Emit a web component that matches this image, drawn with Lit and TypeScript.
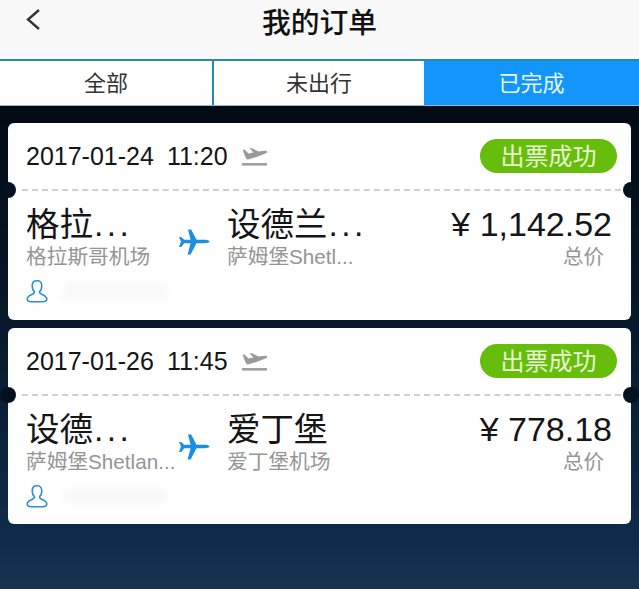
import { LitElement, html, css } from "lit";
import { customElement } from "lit/decorators.js";

const plane = html`<svg class="plane" viewBox="0 0 32 26"><path d="M31.5 12.5C31.5 11.4 29 10.8 26 10.8L18.5 10.8L13.2.5L10 .5L12.6 10.8L6.2 10.8L3.2 8L1 8L3 12.5L1 18L3.2 18L6.2 14.2L12.6 14.2L9.6 25.5L12.6 25.5L18.5 14.2L26 14.2C29 14.2 31.5 13.6 31.5 12.5Z"/></svg>`;
const takeoff = html`<svg class="dep" viewBox="0 0 26 20"><path d="M.7 2L2.5 1.5L6.5 5.5L11.5 4.5L7.5 .3L10 .3L16.5 3.5L23 2.8C25 2.8 25.8 4 24.5 5C18 8 10 10.5 6 11.5C4.5 11.8 3.5 10 .7 2Z" fill="#9a9a9a"/><rect x="0" y="15" width="25" height="2.6" fill="#a0a0a0"/></svg>`;
const person = html`<svg class="person" viewBox="0 0 22 24"><path d="M11 1.5C7.8 1.5 6.2 4 6.2 7C6.2 9.5 7.2 11.5 8.4 12.6C8.8 13.8 8 14.6 6 15.4C3.2 16.5 1.2 17.8 1.2 20C1.2 22 3 22.8 6 22.8L16 22.8C19 22.8 20.8 22 20.8 20C20.8 17.8 18.8 16.5 16 15.4C14 14.6 13.2 13.8 13.6 12.6C14.8 11.5 15.8 9.5 15.8 7C15.8 4 14.2 1.5 11 1.5Z" fill="none" stroke="#2b8fcc" stroke-width="1.6"/></svg>`;

interface Order {
  date: string; time: string; from: string; fromMore: boolean; fromSub: string; to: string; toMore: boolean; toSub: string; price: string;
}
const orders: Order[] = [
  { date: "2017-01-24", time: "11:20", from: "格拉", fromMore: true, fromSub: "格拉斯哥机场", to: "设德兰", toMore: true, toSub: "萨姆堡Shetl...", price: "¥ 1,142.52" },
  { date: "2017-01-26", time: "11:45", from: "设德", fromMore: true, fromSub: "萨姆堡Shetlan...", to: "爱丁堡", toMore: false, toSub: "爱丁堡机场", price: "¥ 778.18" },
];

@customElement("app-root")
export class AppRoot extends LitElement {
  static styles = css`
    :host {
      display: block; height: 589px; overflow: hidden;
      font-family: "Liberation Sans", "Noto Sans CJK SC", sans-serif;
      background: linear-gradient(180deg, #020a14 106px, #07192c 330px, #0f2a48 530px, #17344f 589px);
    }
    .head {
      height: 59px; background: #f8f8f8; display: flex; align-items: center; justify-content: center;
      position: relative; padding-bottom: 19px; box-sizing: border-box;
      font-size: 28.8px; font-weight: 500; color: #111;
    }
    .back { position: absolute; left: 25px; top: 8px; width: 16px; height: 24px; }
    .tabs {
      display: grid; grid-template-columns: 212px 212px 1fr; height: 47px; box-sizing: border-box;
      background: #fff; border-top: 2px solid #2a86b4; border-bottom: 1.5px solid #7fc0e0;
    }
    .tab { display: flex; align-items: center; justify-content: center; font-size: 22px; color: #333; padding-bottom: 4px; }
    .tab + .tab { border-left: 2px solid #2a86b4; }
    .tab.on { background: #1296fb; color: #e8f8ff; border-left: 0; }
    .list { display: flex; flex-direction: column; gap: 8px; padding: 17px 8px 0; }
    .card { background: #fff; border-radius: 6px; position: relative; height: 197px; box-sizing: border-box; color: #151515; }
    .card + .card { height: 196px; }
    .top { height: 66px; display: flex; align-items: center; padding: 0 14px 0 18px; box-sizing: border-box; }
    .when { font-size: 25px; white-space: nowrap; display: flex; gap: 13px; }
    .dep { width: 26px; height: 20px; margin-left: 14px; margin-top: 4px; }
    .pill {
      margin-left: auto; height: 34px; width: 137px; border-radius: 17px; background: #67bd0c; color: #e8f8d0;
      display: flex; align-items: center; justify-content: center; font-size: 24px; padding-bottom: 4px; box-sizing: border-box;
    }
    .dash { height: 0; border-top: 2px dashed #cfcfcf; margin: 0 10px 0 14px; }
    .notch { position: absolute; top: 59px; width: 16px; height: 16px; border-radius: 50%; background: #03101e; }
    .notch.l { left: -8px; }
    .notch.r { right: -8px; }
    .route { display: flex; padding: 14px 19px 0 18px; }
    .col { display: flex; flex-direction: column; }
    .col.a { width: 152px; }
    .col.b { flex: 1; margin-left: -1px; }
    .big { font-size: 33.5px; line-height: 39px; color: #151515; white-space: nowrap; }
    .more { letter-spacing: 3.5px; margin-left: 1px; }
    .sub { font-size: 20.7px; line-height: 25px; color: #959595; white-space: nowrap; }
    .plane { width: 32px; height: 26px; fill: #1a8ee0; margin: 24px 18px 0 0; }
    .price { display: flex; flex-direction: column; align-items: flex-end; }
    .amt { font-size: 34px; line-height: 39px; white-space: nowrap; }
    .tot { font-size: 20.5px; line-height: 25px; color: #959595; margin-right: 8px; }
    .who { display: flex; align-items: center; padding: 10px 0 0 18px; }
    .person { width: 22px; height: 24px; }
    .smudge { width: 105px; height: 14px; margin-left: 15px; border-radius: 4px; background: #f2f2f2; filter: blur(4px); opacity: .55; }
  `;

  render() {
    return html`
      <div class="head">
        <svg class="back" viewBox="0 0 16 24"><path d="M14 2L3 11.5L14 21" fill="none" stroke="#333" stroke-width="2.4"/></svg>
        我的订单
      </div>
      <div class="tabs">
        <div class="tab">全部</div>
        <div class="tab">未出行</div>
        <div class="tab on">已完成</div>
      </div>
      <div class="list">
        ${orders.map((o) => html`
          <div class="card">
            <div class="top">
              <span class="when"><span>${o.date}</span><span>${o.time}</span></span>
              ${takeoff}
              <span class="pill">出票成功</span>
            </div>
            <div class="dash"></div>
            <i class="notch l"></i><i class="notch r"></i>
            <div class="route">
              <div class="col a"><span class="big">${o.from}${o.fromMore ? html`<span class="more">...</span>` : ""}</span><span class="sub">${o.fromSub}</span></div>
              ${plane}
              <div class="col b"><span class="big">${o.to}${o.toMore ? html`<span class="more">...</span>` : ""}</span><span class="sub">${o.toSub}</span></div>
              <div class="price"><span class="amt">${o.price}</span><span class="tot">总价</span></div>
            </div>
            <div class="who">${person}<span class="smudge"></span></div>
          </div>`)}
      </div>
    `;
  }
}
